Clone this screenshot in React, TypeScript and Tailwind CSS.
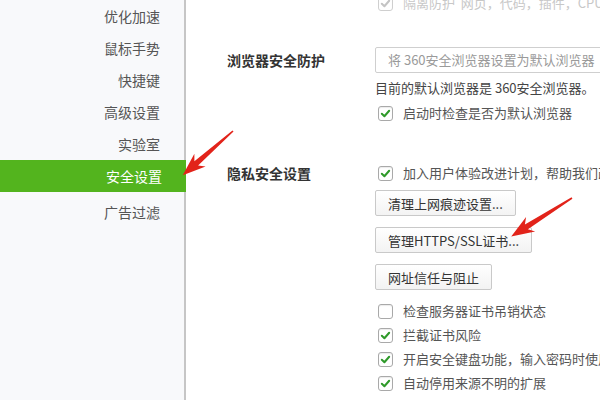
import React from 'react'

const font = { fontFamily: '"Noto Sans CJK SC", "Noto Sans", sans-serif' }

const navItems = ['优化加速', '鼠标手势', '快捷键', '高级设置', '实验室', '安全设置', '广告过滤']

const CheckBox = ({ checked = true, faded = false }: { checked?: boolean; faded?: boolean }) => (
  <span
    className={`w-[15px] h-[15px] shrink-0 rounded-[3px] border bg-white flex items-center justify-center shadow-[inset_0_1px_1px_rgba(0,0,0,0.08)] ${
      faded ? 'border-[#cfcfcf]' : 'border-[#a9a9a9]'
    }`}
  >
    {checked && (
      <svg width="11" height="11" viewBox="0 0 12 12">
        <path
          d="M2 6.3 L4.8 9 L10 3"
          fill="none"
          stroke={faded ? '#c4c4c4' : '#2f9a2a'}
          strokeWidth="2.2"
          strokeLinecap="round"
          strokeLinejoin="round"
        />
      </svg>
    )}
  </span>
)

const CheckRow = ({ children, checked = true, faded = false }: { children: React.ReactNode; checked?: boolean; faded?: boolean }) => (
  <div className="flex items-center h-[24px] pl-[3px] gap-[10px] text-[13px]">
    <CheckBox checked={checked} faded={faded} />
    <span className={`whitespace-nowrap ${faded ? 'text-[#c8c8c8]' : 'text-[#555]'}`}>{children}</span>
  </div>
)

const Button = ({ children }: { children: React.ReactNode }) => (
  <button className="h-[26px] px-[12px] self-start border border-[#c9c9c9] rounded-[2px] bg-gradient-to-b from-white to-[#f3f3f3] text-[#333] text-[13px] leading-none whitespace-nowrap">
    {children}
  </button>
)

// red callout arrow drawn along x, then rotated into place
const Arrow = ({ x, y, len, angle }: { x: number; y: number; len: number; angle: number }) => (
  <g transform={`translate(${x} ${y}) rotate(${angle})`}>
    <polygon
      points={`0,-0.8 ${len - 18},-2.8 ${len - 23},-8.5 ${len},0 ${len - 23},8.5 ${len - 18},2.8 0,0.8`}
      fill="#e2231a"
    />
  </g>
)

export default function App() {
  return (
    <div className="relative w-[600px] h-[400px] overflow-hidden bg-white flex text-[14px]" style={font}>
      <div className="w-[186px] shrink-0 bg-[#f8f9fb] border-r-2 border-[#c6c6c6]">
        {navItems.map((item, i) => (
          <div
            key={item}
            className={`h-[32px] flex items-center justify-end pr-[24px] ${i === 6 ? 'mt-[4px]' : ''} ${
              i === 5 ? 'bg-[#53b41e] text-white -mr-[2px]' : 'text-[#555]'
            }`}
          >
            {item}
          </div>
        ))}
      </div>

      <div className="flex-1 pl-[41px] overflow-hidden">
        <div className="flex -mt-[9px]">
          <div className="w-[148px] shrink-0" />
          <CheckRow faded>隔离防护 &nbsp;网页，代码，插件，CPU进程</CheckRow>
        </div>

        {/* browser protection */}
        <div className="flex mt-[32px]">
          <div className="w-[148px] shrink-0 h-[26px] flex items-center font-bold text-[#333]">浏览器安全防护</div>
          <div className="flex flex-col flex-1">
            <div className="h-[26px] w-[280px] shrink-0 border border-[#cfcfcf] rounded-[2px] flex items-center pl-[12px] text-[13px] text-[#9a9a9a] whitespace-nowrap">
              将 360安全浏览器设置为默认浏览器
            </div>
            <div className="h-[20px] mt-[5px] leading-[20px] text-[13px] text-[#444] whitespace-nowrap">目前的默认浏览器是 360安全浏览器。</div>
            <div className="mt-[3px]">
              <CheckRow>启动时检查是否为默认浏览器</CheckRow>
            </div>
          </div>
        </div>

        {/* privacy */}
        <div className="flex mt-[36px]">
          <div className="w-[148px] shrink-0 h-[24px] flex items-center font-bold text-[#333]">隐私安全设置</div>
          <div className="flex flex-col flex-1">
            <CheckRow>加入用户体验改进计划，帮助我们改善产品</CheckRow>
            <div className="flex flex-col gap-[11px] mt-[5px]">
              <Button>清理上网痕迹设置...</Button>
              <Button>管理HTTPS/SSL证书...</Button>
              <Button>网址信任与阻止</Button>
            </div>
            <div className="mt-[9px]">
              <CheckRow checked={false}>检查服务器证书吊销状态</CheckRow>
              <CheckRow>拦截证书风险</CheckRow>
              <CheckRow>开启安全键盘功能，输入密码时使用</CheckRow>
              <CheckRow>自动停用来源不明的扩展</CheckRow>
            </div>
          </div>
        </div>
      </div>

      <svg className="absolute inset-0 pointer-events-none" width="600" height="400">
        <Arrow x={233} y={131} len={67} angle={138.6} />
        <Arrow x={572} y={198} len={72} angle={147.6} />
      </svg>
    </div>
  )
}
